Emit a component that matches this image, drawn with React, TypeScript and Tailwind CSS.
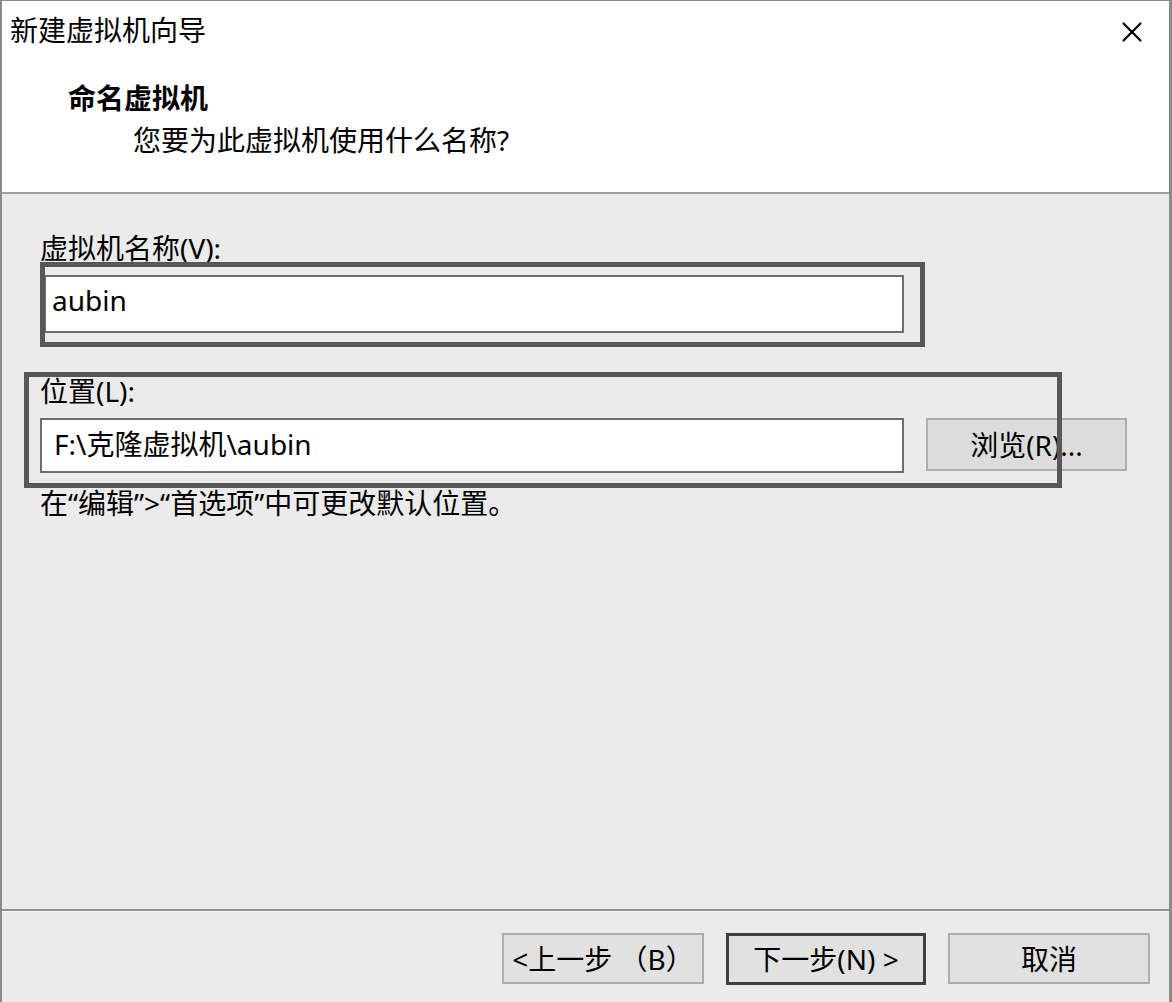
import { X } from "lucide-react";

const font = { fontFamily: '"Noto Sans", "Noto Sans CJK SC", sans-serif' };

function WizardButton({
  label,
  focused = false,
}: {
  label: string;
  focused?: boolean;
}) {
  return (
    <button
      type="button"
      className={
        focused
          ? "h-[52px] w-[200px] border-[3px] border-[#3f3f3f] bg-[#e1e1e1] text-[28px] leading-[36px] text-black"
          : "h-[51px] w-[202px] border-2 border-[#adadad] bg-[#e1e1e1] text-[28px] leading-[36px] text-black"
      }
    >
      {label}
    </button>
  );
}

export default function App() {
  return (
    <div
      className="flex h-[1002px] w-[1172px] flex-col border-t border-l-2 border-r-[3px] border-[#8a8a8a] bg-[#ebebeb] text-black"
      style={font}
    >
      {/* header */}
      <div className="relative h-[193px] shrink-0 border-b-2 border-[#a0a0a0] bg-white">
        <div className="pl-[8px] pt-[11px] text-[28px] leading-[36px]">新建虚拟机向导</div>
        <X className="absolute right-[20px] top-[14px] h-[34px] w-[34px]" strokeWidth={1.5} />
        <div className="mt-[32px] pl-[66px] text-[28px] font-bold leading-[36px]">命名虚拟机</div>
        <div className="mt-[6px] pl-[131px] text-[28px] leading-[36px]">
          您要为此虚拟机使用什么名称?
        </div>
      </div>

      {/* body */}
      <div className="relative flex-1 pl-[38px] pt-[36px]">
        <div className="text-[28px] leading-[36px]">虚拟机名称(V):</div>
        <div className="ml-[4px] mt-[9px] flex h-[58px] w-[860px] items-center border-2 border-[#6e6e6e] bg-white pb-[8px] pl-[6px] text-[28px]">
          aubin
        </div>

        <div className="mt-[40px] text-[28px] leading-[36px]">位置(L):</div>
        <div className="mt-[9px] flex items-start gap-[22px]">
          <div className="flex h-[55px] w-[864px] items-center border-2 border-[#6e6e6e] bg-white pb-[4px] pl-[12px] text-[28px]">
            F:\克隆虚拟机\aubin
          </div>
          <button
            type="button"
            className="h-[53px] w-[201px] border-2 border-[#adadad] bg-[#dcdcdc] text-[28px] leading-[36px]"
          >
            浏览(R)...
          </button>
        </div>
        <div className="mt-[12px] text-[28px] leading-[36px]">
          在“编辑”&gt;“首选项”中可更改默认位置。
        </div>

        {/* annotation boxes */}
        <div className="pointer-events-none absolute left-[38px] top-[68px] h-[85px] w-[885px] border-[5px] border-[#575757]" />
        <div className="pointer-events-none absolute left-[22px] top-[178px] h-[116px] w-[1038px] border-[5px] border-[#575757]" />
      </div>

      {/* footer */}
      <div className="h-[93px] shrink-0 border-t-2 border-[#8f8f8f]">
        <div className="h-px bg-white/70" />
        <div className="flex justify-end gap-[22px] pr-[19px] pt-[21px]">
          <WizardButton label="<上一步 （B）" />
          <WizardButton label="下一步(N) >" focused />
          <WizardButton label="取消" />
        </div>
      </div>
    </div>
  );
}
